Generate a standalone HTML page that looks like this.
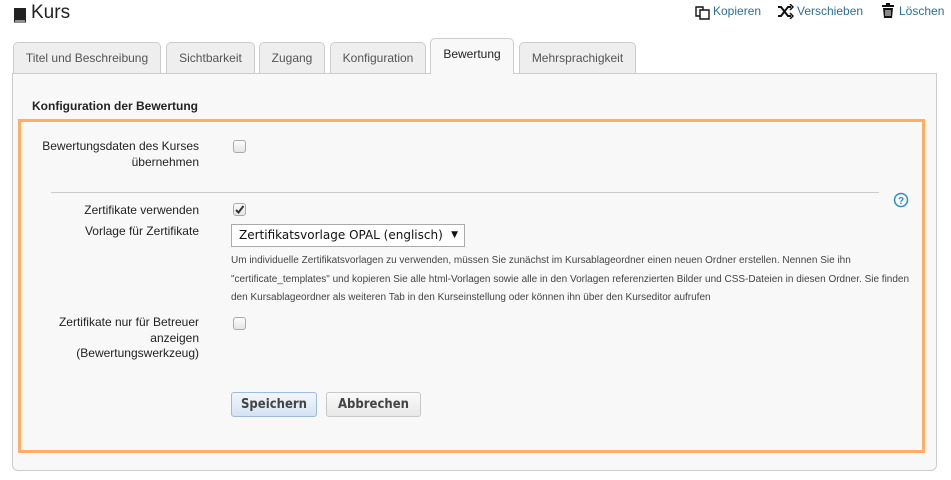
<!DOCTYPE html>
<html><head><meta charset="utf-8"><style>
body{margin:0;width:951px;height:480px;background:#fff;font-family:"Liberation Sans",Arial,sans-serif;position:relative;overflow:hidden;color:#222}
.a{position:absolute}
.tab{position:absolute;top:42px;height:31px;background:#eee;border:1px solid #ccc;border-bottom:none;border-radius:5px 5px 0 0;font-size:12px;color:#555;text-align:center;line-height:31px;box-sizing:border-box;white-space:nowrap}
.lbl{position:absolute;right:752px;text-align:right;font-size:12px;line-height:16px;color:#222;white-space:nowrap}
.cb{position:absolute;left:233px;width:11px;height:11px;border:1px solid #aaa;border-radius:3px;background:linear-gradient(#fdfdfd,#e4e4e4)}
.btn{position:absolute;top:392px;height:25px;border:1px solid #c8c8c8;border-radius:3px;font-family:"DejaVu Sans Condensed","DejaVu Sans",sans-serif;font-weight:bold;font-size:13px;color:#444;line-height:24px;text-align:center;box-sizing:border-box}
.top{position:absolute;top:4px;font-size:12px;color:#2a6f9a}
</style></head><body>
<svg class="a" style="left:13px;top:7px" width="14" height="16" viewBox="0 0 14 16"><rect x="1" y="1" width="12" height="12" fill="#222"/><rect x="1.5" y="13" width="11" height="2" fill="none" stroke="#222" stroke-width="1"/></svg>
<div class="a" style="left:31px;top:2px;font-size:19px;color:#222">Kurs</div>
<svg class="a" style="left:695px;top:4px" width="16" height="16" viewBox="0 0 16 16" fill="none" stroke="#111" stroke-width="1.4"><path d="M1 3h7v9H1z"/><path d="M5 6h9v9H5z" fill="#fff"/></svg>
<div class="top" style="left:713px">Kopieren</div>
<svg class="a" style="left:777px;top:4px" width="17" height="15" viewBox="0 0 17 15" fill="none" stroke="#111" stroke-width="2"><path d="M1 3h3l7 9h3M1 12h3l7-9h3"/><path d="M13 0l3 3-3 3M13 9l3 3-3 3" stroke-width="1.5"/></svg>
<div class="top" style="left:797px">Verschieben</div>
<svg class="a" style="left:881px;top:3px" width="14" height="16" viewBox="0 0 14 16"><rect x="1" y="2" width="12" height="2" fill="#111"/><rect x="5" y="0" width="4" height="2" fill="#111"/><path d="M2 5h10l-1 10H3z" fill="#111"/><path d="M5 7v6M7 7v6M9 7v6" stroke="#fff"/></svg>
<div class="top" style="left:899px">Löschen</div>

<div class="a" style="left:12px;top:73px;width:925px;height:398px;border:1px solid #ccc;border-radius:0 0 6px 6px;background:#f8f8f8;box-sizing:border-box"></div>
<div class="tab" style="left:13px;width:148px">Titel und Beschreibung</div>
<div class="tab" style="left:166px;width:89px">Sichtbarkeit</div>
<div class="tab" style="left:259px;width:66px">Zugang</div>
<div class="tab" style="left:330px;width:96px">Konfiguration</div>
<div class="tab" style="left:430px;top:38px;height:36px;width:84px;background:#f8f8f8;color:#222;line-height:30px">Bewertung</div>
<div class="tab" style="left:519px;width:117px">Mehrsprachigkeit</div>

<div class="a" style="left:32px;top:99px;font-size:12px;font-weight:bold">Konfiguration der Bewertung</div>
<div class="a" style="left:18px;top:119px;width:907px;height:334px;border:3px solid #fdb064;box-sizing:border-box"></div>

<div class="lbl" style="top:138px">Bewertungsdaten des Kurses<br>übernehmen</div>
<div class="cb" style="top:140px"></div>
<div class="a" style="left:51px;top:192px;width:828px;height:1px;background:#ccc"></div>
<svg class="a" style="left:893px;top:192px" width="16" height="16" viewBox="0 0 16 16"><circle cx="8" cy="8" r="6.5" fill="none" stroke="#2a8fc4" stroke-width="1.5"/><text x="8" y="12" font-size="10" font-weight="bold" text-anchor="middle" fill="#2a8fc4" font-family="Liberation Sans">?</text></svg>
<div class="lbl" style="top:202px">Zertifikate verwenden</div>
<div class="cb" style="top:203px"><svg width="11" height="11" style="position:absolute;left:0;top:0"><path d="M2 6l2.5 2.5L9.5 2" fill="none" stroke="#333" stroke-width="2"/></svg></div>
<div class="lbl" style="top:223px">Vorlage für Zertifikate</div>
<div class="a" style="left:231px;top:224px;width:234px;height:23px;border:1px solid #aaa;background:#fff;box-sizing:border-box;font-family:'DejaVu Sans',sans-serif;font-size:12px;line-height:21px;padding-left:7px;color:#111;white-space:nowrap">Zertifikatsvorlage OPAL (englisch)<span style="position:absolute;right:6px;font-size:9px">▼</span></div>
<div class="a" style="left:231px;top:252px;width:700px;font-size:10px;line-height:18.5px;color:#444;white-space:nowrap">Um individuelle Zertifikatsvorlagen zu verwenden, müssen Sie zunächst im Kursablageordner einen neuen Ordner erstellen. Nennen Sie ihn<br>"certificate_templates" und kopieren Sie alle html-Vorlagen sowie alle in den Vorlagen referenzierten Bilder und CSS-Dateien in diesen Ordner. Sie finden<br>den Kursablageordner als weiteren Tab in den Kurseinstellung oder können ihn über den Kurseditor aufrufen</div>
<div class="lbl" style="top:315px;line-height:15.5px">Zertifikate nur für Betreuer<br>anzeigen<br>(Bewertungswerkzeug)</div>
<div class="cb" style="top:317px"></div>
<div class="btn" style="left:231px;width:86px;background:linear-gradient(#f2f6fb,#d6e2f2);border-color:#9fb8dc">Speichern</div>
<div class="btn" style="left:326px;width:95px;background:linear-gradient(#fafafa,#e8e8e8)">Abbrechen</div>
</body></html>
